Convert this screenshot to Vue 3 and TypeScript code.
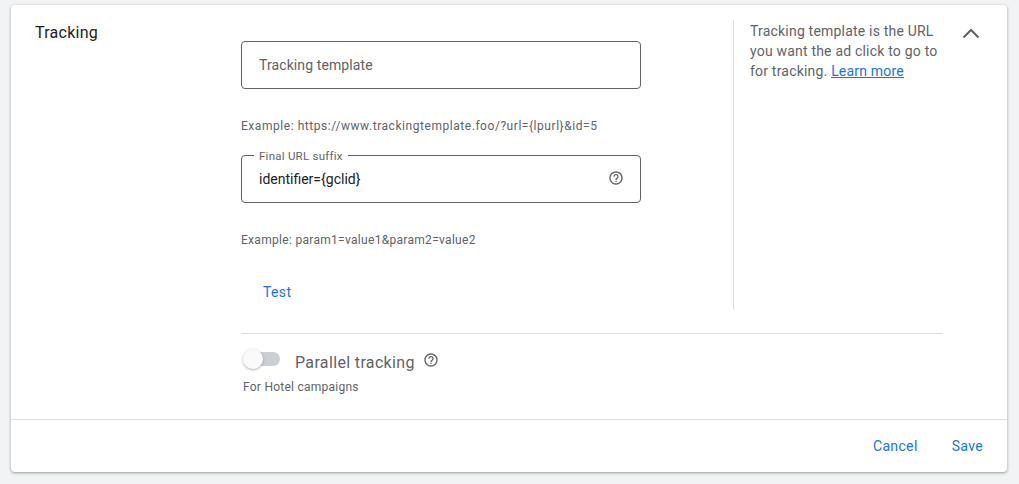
<script setup lang="ts">
const title: string = 'Tracking'
</script>

<template>
  <div class="page">
    <section class="card">
      <div class="body">
        <h2 class="title">{{ title }}</h2>
        <div class="main">
          <div class="upper">
            <div class="fields">
              <div class="field"><span class="placeholder">Tracking template</span></div>
              <p class="hint first">Example: https://www.trackingtemplate.foo/?url={lpurl}&amp;id=5</p>
              <div class="field filled">
                <span class="float">Final URL suffix</span>
                <span class="value">identifier={gclid}</span>
                <svg class="help" viewBox="0 0 24 24" width="16" height="16"><path fill="#5f6368" d="M11 18h2v-2h-2v2zm1-16C6.48 2 2 6.48 2 12s4.48 10 10 10 10-4.48 10-10S17.52 2 12 2zm0 18c-4.41 0-8-3.59-8-8s3.59-8 8-8 8 3.59 8 8-3.59 8-8 8zm0-14c-2.21 0-4 1.79-4 4h2c0-1.1.9-2 2-2s2 .9 2 2c0 2-3 1.75-3 5h2c0-2.25 3-2.5 3-5 0-2.21-1.79-4-4-4z"/></svg>
              </div>
              <p class="hint second">Example: param1=value1&amp;param2=value2</p>
              <button class="link test">Test</button>
            </div>
            <aside class="aside">
              <p class="help-text">Tracking template is the URL you want the ad click to go to for tracking. <a class="learn">Learn more</a></p>
            </aside>
            <svg class="chevron" viewBox="0 0 18 12" width="18" height="12"><path d="M1.5 10.5 9 3l7.5 7.5" fill="none" stroke="#5f6368" stroke-width="2"/></svg>
          </div>
          <div class="parallel">
            <div class="row">
              <span class="toggle"><span class="knob"></span></span>
              <span class="label">Parallel tracking</span>
              <svg class="help-small" viewBox="0 0 24 24" width="16" height="16"><path fill="#5f6368" d="M11 18h2v-2h-2v2zm1-16C6.48 2 2 6.48 2 12s4.48 10 10 10 10-4.48 10-10S17.52 2 12 2zm0 18c-4.41 0-8-3.59-8-8s3.59-8 8-8 8 3.59 8 8-3.59 8-8 8zm0-14c-2.21 0-4 1.79-4 4h2c0-1.1.9-2 2-2s2 .9 2 2c0 2-3 1.75-3 5h2c0-2.25 3-2.5 3-5 0-2.21-1.79-4-4-4z"/></svg>
            </div>
            <p class="sub">For Hotel campaigns</p>
          </div>
        </div>
      </div>
      <footer class="footer">
        <button class="link">Cancel</button>
        <button class="link">Save</button>
      </footer>
    </section>
  </div>
</template>

<style>
html, body { margin: 0; background: #f1f3f4; }
</style>

<style scoped>
.page {
  width: 1019px;
  height: 484px;
  padding: 5px 12px 12px 11px;
  box-sizing: border-box;
  font-family: Roboto, "Liberation Sans", sans-serif;
  overflow: hidden;
}
.card {
  background: #fff;
  border-radius: 4px;
  height: 467px;
  box-shadow: 0 1px 2px rgba(60,64,67,.3), 0 1px 3px 1px rgba(60,64,67,.15);
  display: flex;
  flex-direction: column;
}
.body { flex: 1; display: flex; }
.title {
  width: 230px;
  box-sizing: border-box;
  margin: 0;
  padding: 17px 0 0 24px;
  font-size: 16px;
  line-height: 22px;
  font-weight: 400;
  color: #202124;
  letter-spacing: .25px;
}
.main { width: 702px; }
.upper { display: flex; position: relative; height: 303px; padding-top: 15px; box-sizing: border-box; }
.fields { width: 492px; }
.field {
  width: 400px;
  height: 48px;
  box-sizing: border-box;
  border: 1px solid #5f6368;
  border-radius: 4px;
  padding: 0 17px;
  margin-top: 21px;
  display: flex;
  align-items: center;
  position: relative;
  font-size: 14px;
}
.placeholder { color: #5f6368; letter-spacing: .1px; margin-top: -1px; }
.value { color: #202124; flex: 1; }
.float {
  position: absolute;
  top: -7px;
  left: 12px;
  padding: 0 5px;
  background: #fff;
  font-size: 11.5px;
  line-height: 14px;
  color: #5f6368;
  letter-spacing: .25px;
}
.help { margin-right: -1px; margin-top: -2px; }
.hint { margin: 0; font-size: 12px; line-height: 14px; color: #5f6368; }
.hint.first { margin-top: 30px; margin-bottom: 22px; letter-spacing: .55px; }
.hint.second { margin-top: 30px; margin-bottom: 35px; letter-spacing: .3px; }
.link {
  border: 0;
  background: none;
  padding: 0;
  font: 400 14px/20px Roboto, "Liberation Sans", sans-serif;
  color: #1a73e8;
  letter-spacing: .35px;
}
.test { display: block; margin: 0 0 0 22px; }
.aside {
  width: 200px;
  height: 289px;
  border-left: 1px solid #dadce0;
  padding-left: 16px;
  box-sizing: border-box;
}
.help-text {
  margin: 1px 0 0;
  width: 190px;
  font-size: 14px;
  line-height: 20px;
  color: #5f6368;
  letter-spacing: .2px;
}
.learn { color: #1a73e8; text-decoration: underline; }
.chevron { position: absolute; left: 721px; top: 22px; }
.parallel {
  border-top: 1px solid #dadce0;
  width: 702px;
  margin-top: 25px;
}
.row { display: flex; align-items: center; height: 26px; margin-top: 15px; position: relative; }
.toggle {
  width: 36px;
  height: 14px;
  border-radius: 7px;
  background: #ccced6;
  position: relative;
  margin: -6px 15px 0 3px;
  flex: none;
}
.knob {
  position: absolute;
  left: -1px;
  top: -3px;
  width: 20px;
  height: 20px;
  border-radius: 50%;
  background: #fafafa;
  box-shadow: 0 1px 3px rgba(60,64,67,.4);
}
.label { font-size: 16px; color: #5f6368; letter-spacing: .35px; }
.help-small { margin-left: 8px; margin-top: -4px; }
.sub { margin: 5px 0 0 2px; font-size: 12px; line-height: 14px; color: #5f6368; letter-spacing: .25px; }
.footer {
  height: 53px;
  box-sizing: border-box;
  border-top: 1px solid #dadce0;
  display: flex;
  justify-content: flex-end;
  align-items: center;
  gap: 34px;
  padding: 0 24px 0 0;
}
</style>
